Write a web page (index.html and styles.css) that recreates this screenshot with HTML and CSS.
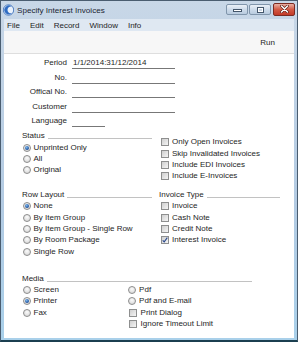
FILE: index.html
```html
<!DOCTYPE html>
<html lang="en">
<head>
    <meta charset="UTF-8">
    <title>Specify Interest Invoices</title>
    <link rel="stylesheet" href="styles.css">
</head>
<body>
    <div class="window">
        <div class="titlebar">
            <svg class="app-icon" width="11" height="12" viewBox="0 0 11 12">
                <circle cx="5.5" cy="6" r="5.2" fill="#e9f1fb" stroke="#2d64b5" stroke-width="0.8"/>
                <path d="M8.6 2.6 A4.4 4.4 0 1 0 8.8 9.2 A3.4 3.4 0 1 1 8.6 2.6 Z" fill="#2f6cc2"/>
            </svg>
            <span class="title">Specify Interest Invoices</span>
            <div class="caption-buttons">
                <span class="cap-btn cap-min"><span class="min-glyph"></span></span>
                <span class="cap-btn cap-max"><span class="max-glyph"></span></span>
                <span class="cap-btn cap-close">
                    <svg width="9" height="8" viewBox="0 0 9 8">
                        <path d="M1.5 1 L7.5 7 M7.5 1 L1.5 7" stroke="#5a1d16" stroke-width="2.8" stroke-linecap="round"/>
                        <path d="M1.5 1 L7.5 7 M7.5 1 L1.5 7" stroke="#fff" stroke-width="1.5" stroke-linecap="round"/>
                    </svg>
                </span>
            </div>
        </div>
        <div class="menubar">
            <span>File</span>
            <span>Edit</span>
            <span>Record</span>
            <span>Window</span>
            <span>Info</span>
        </div>
        <div class="client">
            <div class="toolbar">
                <span class="tool-btn">Run</span>
            </div>
            <div class="content">
                <div class="fields">
                    <div class="field"><span class="field-label">Period</span><span class="value">1/1/2014:31/12/2014</span></div>
                    <div class="field"><span class="field-label">No.</span><span class="value"></span></div>
                    <div class="field"><span class="field-label">Offical No.</span><span class="value"></span></div>
                    <div class="field"><span class="field-label">Customer</span><span class="value"></span></div>
                    <div class="field"><span class="field-label">Language</span><span class="value short"></span></div>
                </div>

                <div class="pair status-pair">
                    <div class="group group-left">
                        <div class="group-title">Status</div>
                        <div class="opt"><span class="radio on"></span>Unprinted Only</div>
                        <div class="opt"><span class="radio"></span>All</div>
                        <div class="opt"><span class="radio"></span>Original</div>
                    </div>
                    <div class="group group-right no-title">
                        <div class="opt"><span class="check"></span>Only Open Invoices</div>
                        <div class="opt"><span class="check"></span>Skip Invalidated Invoices</div>
                        <div class="opt"><span class="check"></span>Include EDI Invoices</div>
                        <div class="opt"><span class="check"></span>Include E-Invoices</div>
                    </div>
                </div>

                <div class="pair layout-pair">
                    <div class="group group-left">
                        <div class="group-title">Row Layout</div>
                        <div class="opt"><span class="radio on"></span>None</div>
                        <div class="opt"><span class="radio"></span>By Item Group</div>
                        <div class="opt"><span class="radio"></span>By Item Group - Single Row</div>
                        <div class="opt"><span class="radio"></span>By Room Package</div>
                        <div class="opt"><span class="radio"></span>Single Row</div>
                    </div>
                    <div class="group group-right">
                        <div class="group-title">Invoice Type</div>
                        <div class="opt"><span class="check"></span>Invoice</div>
                        <div class="opt"><span class="check"></span>Cash Note</div>
                        <div class="opt"><span class="check"></span>Credit Note</div>
                        <div class="opt"><span class="check">
                            <svg width="6" height="6" viewBox="0 0 6 6"><path d="M0.7 3.3 L2.2 4.9 L5.3 0.6" fill="none" stroke="#2b4a8e" stroke-width="1.1"/></svg>
                        </span>Interest Invoice</div>
                    </div>
                </div>

                <div class="media">
                    <div class="group-title">Media</div>
                    <div class="media-cols">
                        <div class="group">
                            <div class="opt"><span class="radio"></span>Screen</div>
                            <div class="opt"><span class="radio on"></span>Printer</div>
                            <div class="opt"><span class="radio"></span>Fax</div>
                        </div>
                        <div class="group">
                            <div class="opt"><span class="radio"></span>Pdf</div>
                            <div class="opt"><span class="radio"></span>Pdf and E-mail</div>
                            <div class="opt"><span class="check"></span>Print Dialog</div>
                            <div class="opt"><span class="check"></span>Ignore Timeout Limit</div>
                        </div>
                    </div>
                </div>
            </div>
        </div>
    </div>
</body>
</html>
```

FILE: styles.css
```css
* {
    box-sizing: border-box;
}
body {
    margin: 0;
    font-family: 'Liberation Sans', Arial, sans-serif;
    font-size: 8px;
    color: #1e1e1e;
}
.window {
    width: 298px;
    height: 342px;
    border: 1px solid #4a5d70;
    border-bottom: 2px solid #1b3f50;
    background: linear-gradient(#c8d7e7, #b3cbe3 60%, #a9d0ea);
    padding: 0 3px 2px;
    display: flex;
    flex-direction: column;
}

/* title bar */
.titlebar {
    height: 18px;
    display: flex;
    align-items: center;
    flex: none;
}
.app-icon {
    margin-left: -1px;
    flex: none;
}
.title {
    margin-left: 3px;
    font-size: 8.1px;
    color: #1b2633;
}
.caption-buttons {
    margin-left: auto;
    margin-right: -1px;
    align-self: flex-start;
    display: flex;
    align-items: flex-start;
}
.cap-btn {
    width: 22px;
    height: 11px;
    margin-top: 3px;
    border: 1px solid #8095ab;
    border-radius: 2px;
    background: linear-gradient(#eaf0f7, #cddbea 50%, #b9cbdf);
    display: flex;
    align-items: center;
    justify-content: center;
}
.cap-max {
    margin-left: 1px;
}
.cap-min {
    align-items: flex-end;
    padding-bottom: 2px;
}
.min-glyph {
    width: 9px;
    height: 3px;
    background: #fff;
    border: 1px solid #44566b;
}
.max-glyph {
    width: 7px;
    height: 6px;
    border: 1px solid #44566b;
    box-shadow: inset 0 0 0 1px #fff;
    background: #c8d6e5;
}
.cap-close {
    margin-left: 2px;
    margin-top: 2px;
    height: 12.5px;
    border-color: #7b2b22;
    background: linear-gradient(#eab0a3, #d35a45 50%, #c23a28);
}

/* menu */
.menubar {
    height: 12px;
    flex: none;
    display: flex;
    align-items: center;
    gap: 10px;
    padding-left: 3px;
    background: #dfe8f2;
}

/* client area */
.client {
    flex: 1;
    display: flex;
    flex-direction: column;
    background: #fff;
}
.toolbar {
    height: 23px;
    flex: none;
    display: flex;
    align-items: center;
    justify-content: flex-end;
    padding-right: 19px;
    background: #f7f7f7;
    border-bottom: 1px solid #dedede;
}
.content {
    flex: 1;
    padding-top: 0.5px;
}

/* header fields */
.field {
    display: flex;
    align-items: flex-end;
    height: 14.5px;
}
.field-label {
    width: 63px;
    text-align: right;
    line-height: 10px;
    padding-bottom: 1px;
}
.value {
    margin-left: 5px;
    width: 103px;
    height: 11px;
    line-height: 10px;
    padding-left: 1px;
    border-bottom: 1px solid #777;
}
.value.short {
    width: 33px;
}

/* groups */
.pair {
    display: grid;
    grid-template-columns: 137px 1fr;
    padding-left: 18px;
}
.status-pair {
    margin-top: 3.8px;
}
.layout-pair {
    margin-top: 7.4px;
}
.group-left {
    padding-right: 7px;
}
.group-right {
    padding-right: 14px;
}
.no-title {
    padding-top: 6px;
}
.group-title {
    display: flex;
    align-items: center;
    height: 11.3px;
    line-height: 10px;
}
.group-title::after {
    content: '';
    flex: 1;
    margin-left: 3px;
    margin-top: 5px;
    border-bottom: 1px solid #c2c2c2;
}
.opt {
    display: flex;
    align-items: center;
    height: 11.3px;
    line-height: 10px;
    white-space: nowrap;
}
.radio {
    position: relative;
    flex: none;
    width: 8px;
    height: 8px;
    margin: 0 3px 0 0.5px;
    border-radius: 50%;
    border: 1px solid #8d8d8d;
    background: radial-gradient(circle at 50% 35%, #fbfbfb, #dcdcdc 75%);
}
.radio.on::after {
    content: '';
    position: absolute;
    left: 1px;
    top: 1px;
    width: 4px;
    height: 4px;
    border-radius: 50%;
    background: radial-gradient(circle at 40% 35%, #7ab7ec, #1c4f9c 70%);
}
.check {
    flex: none;
    width: 8px;
    height: 8px;
    margin: 0 3.5px 0 1.5px;
    border: 1px solid #8e8f8f;
    background: linear-gradient(135deg, #cfcfcf, #f5f5f5);
    display: flex;
}

/* media */
.media {
    margin-top: 15.9px;
    padding-left: 18px;
    width: 248px;
}
.media-cols {
    display: grid;
    grid-template-columns: 105.6px 1fr;
}
```
